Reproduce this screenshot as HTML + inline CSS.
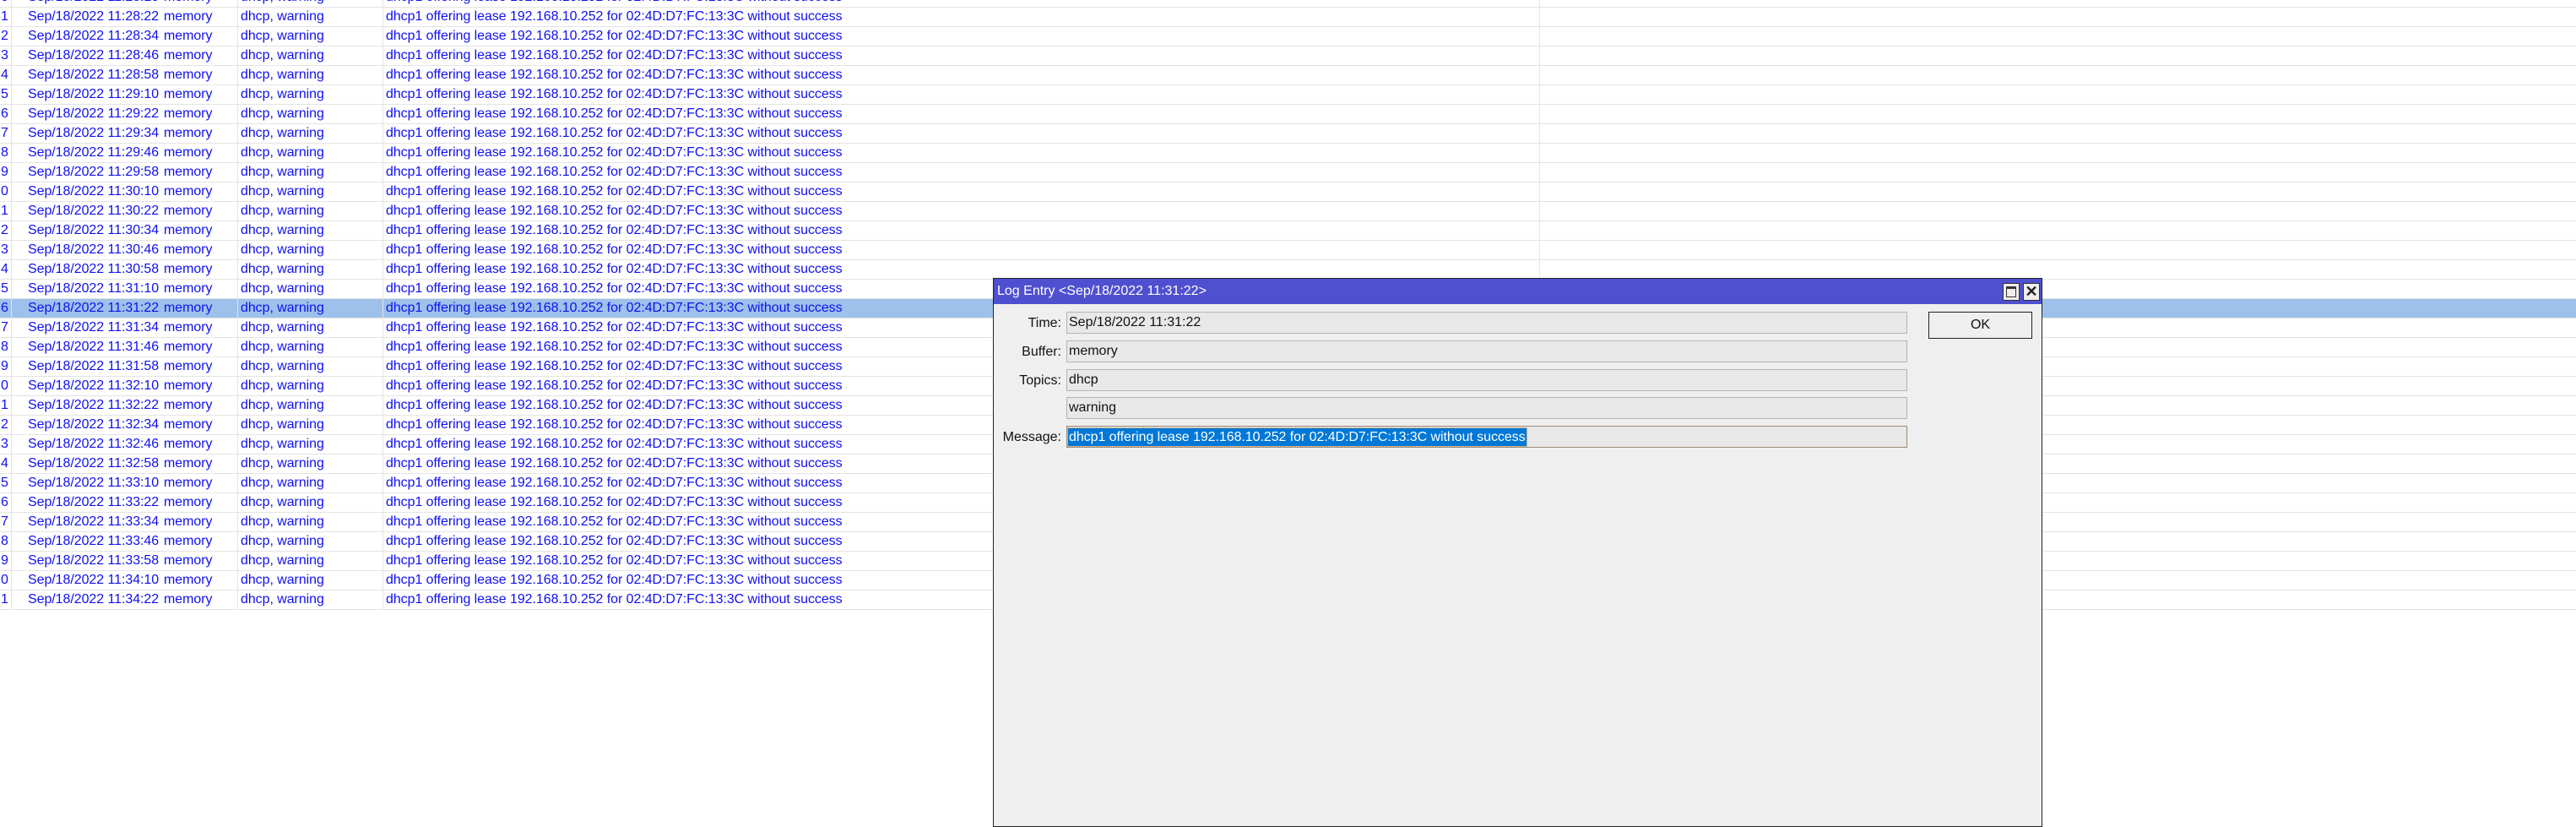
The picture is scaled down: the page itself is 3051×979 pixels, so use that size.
<!DOCTYPE html>
<html><head><meta charset="utf-8"><style>
*{margin:0;padding:0;box-sizing:border-box}
body{width:3051px;height:968px;background:#fff;position:relative;overflow:hidden;font-family:"Liberation Sans",Arial,sans-serif;font-size:16px}
.r{position:absolute;left:0;width:3051px;height:23px;border-bottom:1px solid #e3e3e3;color:#1010f0;line-height:22px;white-space:nowrap;letter-spacing:-0.06px}
.r.s{background:#9dc1ea}
.r span{position:absolute;top:0}
.vl{position:absolute;top:0;width:1px;height:720px;background:#e6e6e6}
.dlg{position:absolute;left:1176px;top:329px;width:1243px;height:650px;background:#efefef;border:1px solid #222}
.tb{position:absolute;left:0;top:0;width:100%;height:30px;background:#4f50cf;color:#fff;line-height:30px;padding-left:4px}
.bt{position:absolute;top:5px;width:20px;height:21px;background:#eee;border:1px solid #333}
.lb{position:absolute;width:80px;text-align:right;left:0;color:#111}
.in{position:absolute;left:86px;width:996px;height:26px;background:#e8e8e8;border:1px solid #b4b4b4;line-height:24px;padding-left:2px;color:#111}
</style></head><body>
<div class="vl" style="left:1823px"></div>
<script>
var h='';
for(var k=0;k<32;k++){var t=11*3600+28*60+10+12*k;var hh=Math.floor(t/3600),mm=Math.floor(t%3600/60),ss=t%60;
var ts=hh+':'+(mm<10?'0':'')+mm+':'+(ss<10?'0':'')+ss;
h+='<div class="r'+(k==16?' s':'')+'" style="top:'+(-14+23*k)+'px"><span style="left:1px">'+(k%10)+'</span><span style="left:33px">Sep/18/2022 '+ts+'</span><span style="left:194px">memory</span><span style="left:285px">dhcp, warning</span><span style="left:457px">dhcp1 offering lease 192.168.10.252 for 02:4D:D7:FC:13:3C without success</span>'+
'<span style="left:281px;width:1px;height:23px;background:#e3e3e3"></span><span style="left:453px;width:1px;height:23px;background:#e3e3e3"></span><span style="left:13px;width:1px;height:23px;background:#e3e3e3"></span></div>';}
document.write(h);
</script>
<div class="dlg">
<div class="tb">Log Entry &lt;Sep/18/2022 11:31:22&gt;</div>
<div class="bt" style="left:1195px"><div style="position:absolute;left:3px;top:3px;width:12px;height:13px;border:1px solid #333;border-top:3px solid #333"></div></div>
<div class="bt" style="left:1219px;text-align:center;line-height:18px;font-size:18px;color:#222;font-weight:bold">✕</div>
<div class="lb" style="top:44px">Time:</div><div class="in" style="top:39px">Sep/18/2022 11:31:22</div>
<div class="lb" style="top:78px">Buffer:</div><div class="in" style="top:73px">memory</div>
<div class="lb" style="top:112px">Topics:</div><div class="in" style="top:107px">dhcp</div>
<div class="in" style="top:140px">warning</div>
<div class="lb" style="top:179px">Message:</div><div class="in" style="top:174px;border:1px solid #9a8a7a;padding:1px"><span style="background:#0078d7;color:#fff;display:inline-block;line-height:21px;padding:0 1px;outline:1px dotted #c08030;letter-spacing:-0.06px">dhcp1 offering lease 192.168.10.252 for 02:4D:D7:FC:13:3C without success</span></div>
<div style="position:absolute;left:1107px;top:39px;width:123px;height:32px;border:1px solid #222;background:#efefef;text-align:center;line-height:30px;color:#111">OK</div>
</div>
</body></html>
